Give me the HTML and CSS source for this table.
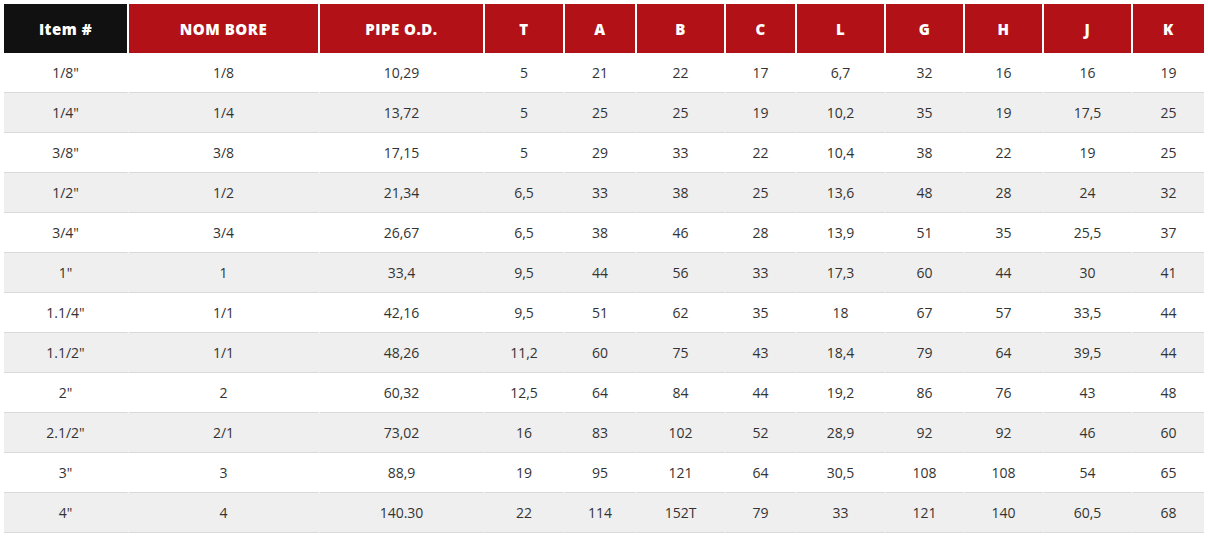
FILE: index.html
```html
<!DOCTYPE html>
<html lang="en">
<head>
<meta charset="utf-8">
<title>Pipe dimensions</title>
<link rel="stylesheet" href="styles.css">
</head>
<body>
<table class="spec">
  <colgroup>
    <col class="w125"><col class="w191"><col class="w165"><col class="w80"><col class="w72"><col class="w89"><col class="w71"><col class="w89"><col class="w79"><col class="w79"><col class="w89"><col class="w71">
  </colgroup>
  <thead>
    <tr>
      <th class="dark">Item #</th><th>NOM BORE</th><th>PIPE O.D.</th><th>T</th><th>A</th><th>B</th><th>C</th><th>L</th><th>G</th><th>H</th><th>J</th><th class="last">K</th>
    </tr>
  </thead>
  <tbody>
    <tr><td>1/8"</td><td>1/8</td><td>10,29</td><td>5</td><td>21</td><td>22</td><td>17</td><td>6,7</td><td>32</td><td>16</td><td>16</td><td>19</td></tr>
    <tr><td>1/4"</td><td>1/4</td><td>13,72</td><td>5</td><td>25</td><td>25</td><td>19</td><td>10,2</td><td>35</td><td>19</td><td>17,5</td><td>25</td></tr>
    <tr><td>3/8"</td><td>3/8</td><td>17,15</td><td>5</td><td>29</td><td>33</td><td>22</td><td>10,4</td><td>38</td><td>22</td><td>19</td><td>25</td></tr>
    <tr><td>1/2"</td><td>1/2</td><td>21,34</td><td>6,5</td><td>33</td><td>38</td><td>25</td><td>13,6</td><td>48</td><td>28</td><td>24</td><td>32</td></tr>
    <tr><td>3/4"</td><td>3/4</td><td>26,67</td><td>6,5</td><td>38</td><td>46</td><td>28</td><td>13,9</td><td>51</td><td>35</td><td>25,5</td><td>37</td></tr>
    <tr><td>1"</td><td>1</td><td>33,4</td><td>9,5</td><td>44</td><td>56</td><td>33</td><td>17,3</td><td>60</td><td>44</td><td>30</td><td>41</td></tr>
    <tr><td>1.1/4"</td><td>1/1</td><td>42,16</td><td>9,5</td><td>51</td><td>62</td><td>35</td><td>18</td><td>67</td><td>57</td><td>33,5</td><td>44</td></tr>
    <tr><td>1.1/2"</td><td>1/1</td><td>48,26</td><td>11,2</td><td>60</td><td>75</td><td>43</td><td>18,4</td><td>79</td><td>64</td><td>39,5</td><td>44</td></tr>
    <tr><td>2"</td><td>2</td><td>60,32</td><td>12,5</td><td>64</td><td>84</td><td>44</td><td>19,2</td><td>86</td><td>76</td><td>43</td><td>48</td></tr>
    <tr><td>2.1/2"</td><td>2/1</td><td>73,02</td><td>16</td><td>83</td><td>102</td><td>52</td><td>28,9</td><td>92</td><td>92</td><td>46</td><td>60</td></tr>
    <tr><td>3"</td><td>3</td><td>88,9</td><td>19</td><td>95</td><td>121</td><td>64</td><td>30,5</td><td>108</td><td>108</td><td>54</td><td>65</td></tr>
    <tr><td>4"</td><td>4</td><td>140.30</td><td>22</td><td>114</td><td>152T</td><td>79</td><td>33</td><td>121</td><td>140</td><td>60,5</td><td>68</td></tr>
  </tbody>
</table>
</body>
</html>
```

FILE: styles.css
```css
html, body {
  margin: 0;
  padding: 0;
  background: #ffffff;
}
body {
  padding: 4px;
  font-family: "Open Sans", "Liberation Sans", sans-serif;
}
.spec {
  width: 1200px;
  table-layout: fixed;
  border-collapse: separate;
  border-spacing: 0;
}
.w125 { width: 125px; }
.w191 { width: 191px; }
.w165 { width: 165px; }
.w80 { width: 80px; }
.w72 { width: 72px; }
.w89 { width: 89px; }
.w71 { width: 71px; }
.w79 { width: 79px; }
.spec th {
  height: 49px;
  padding: 0;
  background: #b11117;
  color: #ffffff;
  font-size: 15px;
  font-weight: 800;
  text-align: center;
  vertical-align: middle;
  border-right: 2px solid #ffffff;
  box-sizing: border-box;
  letter-spacing: 0.5px;
}
.spec th.dark {
  background: #111111;
}
.spec th.last {
  border-right: 0;
}
.spec td {
  height: 40px;
  padding: 0;
  box-sizing: border-box;
  border-bottom: 1px solid #d9d9d9;
  border-right: 2px solid transparent;
  text-align: center;
  vertical-align: middle;
  font-size: 14px;
  color: #333333;
}
.spec td:last-child {
  border-right: 0;
}
.spec tbody tr:nth-child(even) td {
  background: #efefef;
  border-right-color: #efefef;
}
```
